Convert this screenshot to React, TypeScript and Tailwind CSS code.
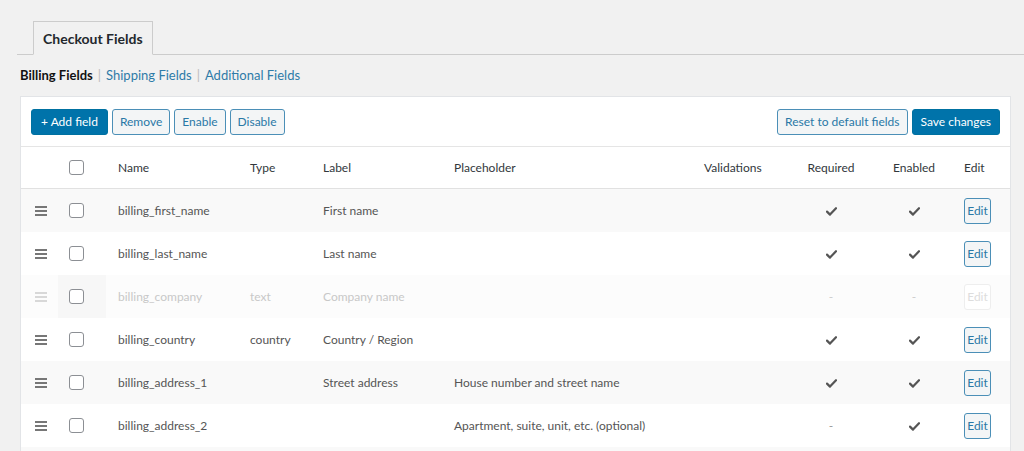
import React from "react";

type Row = {
  name: string;
  type?: string;
  label?: string;
  placeholder?: string;
  required: boolean;
  enabled: boolean;
  disabled?: boolean;
  alt?: boolean;
};

const rows: Row[] = [
  { name: "billing_first_name", label: "First name", required: true, enabled: true, alt: true },
  { name: "billing_last_name", label: "Last name", required: true, enabled: true },
  { name: "billing_company", type: "text", label: "Company name", required: false, enabled: false, disabled: true, alt: true },
  { name: "billing_country", type: "country", label: "Country / Region", required: true, enabled: true },
  { name: "billing_address_1", label: "Street address", placeholder: "House number and street name", required: true, enabled: true, alt: true },
  { name: "billing_address_2", placeholder: "Apartment, suite, unit, etc. (optional)", required: false, enabled: true },
  { name: "billing_city", label: "Town / City", required: true, enabled: true, alt: true },
];

const grid = "grid grid-cols-[37px_48px_132px_73px_131px_250px_89px_100px_66px_1fr] items-center";

function Check({ faded }: { faded?: boolean }) {
  return (
    <svg width="11" height="9" viewBox="0 0 11 9" className="inline-block">
      <path d="M1 4.6 L4 7.6 L10 1.2" fill="none" stroke={faded ? "#ccc" : "#555"} strokeWidth="2.2" strokeLinecap="round" strokeLinejoin="round" />
    </svg>
  );
}

function Drag({ faded }: { faded?: boolean }) {
  const c = faded ? "bg-[#d8d8d8]" : "bg-[#777]";
  return (
    <div className="flex flex-col gap-[2px] w-[12px]">
      <span className={`block h-[2px] w-full ${c}`} />
      <span className={`block h-[2px] w-full ${c}`} />
      <span className={`block h-[2px] w-full ${c}`} />
    </div>
  );
}

function Box() {
  return <span className="block w-[15px] h-[15px] rounded-[3px] border border-[#8c8f94] bg-white" />;
}

const secBtn = "h-[26px] rounded-[3px] bg-[#f3f5f6] border border-[#4b8fb7] text-[#2a78a6] text-[12px]";
const priBtn = "h-[26px] rounded-[3px] bg-[#0073aa] border border-[#0071a1] text-white text-[12px]";

export default function App() {
  return (
    <div className="min-h-[451px] bg-[#f1f1f1] text-[12px] text-[#444] font-['Lato','Liberation_Sans',sans-serif] pt-[20px] overflow-hidden">
      {/* Tabs */}
      <div className="ml-[17px] border-b border-[#ccc] flex h-[35px] items-end">
        <div className="ml-[16px] h-[34px] -mb-px border border-[#ccc] border-b-[#f1f1f1] bg-[#f1f1f1] px-[9px] flex items-center font-bold text-[14px] text-[#23282d]">
          Checkout Fields
        </div>
      </div>

      {/* Sub nav */}
      <div className="ml-[20px] mt-[12px] h-[18px] flex items-center text-[13px]">
        <span className="font-bold text-[#111]">Billing Fields</span>
        <span className="text-[#bbb] mx-[5px]">|</span>
        <span className="text-[#2e7ba8]">Shipping Fields</span>
        <span className="text-[#bbb] mx-[5px]">|</span>
        <span className="text-[#2e7ba8]">Additional Fields</span>
      </div>

      {/* Panel */}
      <div className="ml-[20px] w-[991px] mt-[11px] bg-white border border-[#e2e4e7]">
        {/* toolbar */}
        <div className="flex items-center justify-between px-[10px] pt-[12px] pb-[11px] border-b border-[#e5e5e5]">
          <div className="flex gap-[4px]">
            <button className={`${priBtn} px-[9px]`}>+ Add field</button>
            <button className={`${secBtn} px-[7px]`}>Remove</button>
            <button className={`${secBtn} px-[7px]`}>Enable</button>
            <button className={`${secBtn} px-[7px]`}>Disable</button>
          </div>
          <div className="flex gap-[4px]">
            <button className={`${secBtn} px-[7px]`}>Reset to default fields</button>
            <button className={`${priBtn} px-[8px]`}>Save changes</button>
          </div>
        </div>

        {/* header */}
        <div className={`${grid} h-[42px] border-b border-[#e1e1e1] text-[#32373c]`}>
          <div />
          <div className="pl-[11px]"><Box /></div>
          <div className="pl-[12px]">Name</div>
          <div className="pl-[12px]">Type</div>
          <div className="pl-[12px]">Label</div>
          <div className="pl-[12px]">Placeholder</div>
          <div className="pl-[12px]">Validations</div>
          <div className="text-center">Required</div>
          <div className="text-center">Enabled</div>
          <div className="pl-[17px]">Edit</div>
        </div>

        {rows.map((r) => {
          const txt = r.disabled ? "text-[#c8c8c8]" : "text-[#555]";
          return (
            <div key={r.name} className={`${grid} h-[43px] ${r.alt ? (r.disabled ? "bg-[#fcfcfc]" : "bg-[#f9f9f9]") : "bg-white"} ${txt}`}>
              <div className="pl-[14px]"><Drag faded={r.disabled} /></div>
              <div className={`h-full flex items-center pl-[11px] ${r.disabled ? "bg-[#f7f7f7]" : ""}`}><Box /></div>
              <div className="pl-[12px]">{r.name}</div>
              <div className="pl-[12px]">{r.type ?? ""}</div>
              <div className="pl-[12px]">{r.label ?? ""}</div>
              <div className="pl-[12px]">{r.placeholder ?? ""}</div>
              <div className="pl-[12px]" />
              <div className="text-center">{r.required ? <Check /> : <span className={r.disabled ? "text-[#ccc]" : "text-[#999]"}>-</span>}</div>
              <div className="text-center">{r.enabled ? <Check /> : <span className="text-[#ccc]">-</span>}</div>
              <div className="pl-[17px]">
                <button className={`h-[26px] w-[27px] rounded-[3px] text-[12px] ${r.disabled ? "border border-[#eee] bg-white text-[#ddd]" : "border border-[#4b8fb7] bg-[#f3f5f6] text-[#2a78a6]"}`}>
                  Edit
                </button>
              </div>
            </div>
          );
        })}
      </div>
    </div>
  );
}
